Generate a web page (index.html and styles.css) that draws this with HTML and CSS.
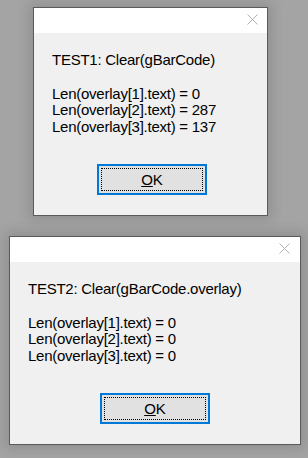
FILE: index.html
```html
<html>
<head>
<title>Message Boxes</title>
<link rel="stylesheet" href="styles.css">
</head>
<body>
<div class="dialog dialog-one">
<div class="title-bar">
<svg class="close" width="11" height="11" viewBox="0 0 11 11"><path d="M0.5 0.5 L10.5 10.5 M10.5 0.5 L0.5 10.5" stroke="#b0b0b0" stroke-width="1" fill="none"/></svg>
</div>
<div class="dialog-body">
<div class="message">
<p>TEST1: Clear(gBarCode)</p>
<p>&nbsp;</p>
<p>Len(overlay[1].text) = 0</p>
<p>Len(overlay[2].text) = 287</p>
<p>Len(overlay[3].text) = 137</p>
</div>
<div class="buttons">
<button class="ok"><span><u>O</u>K</span></button>
</div>
</div>
</div>
<div class="dialog dialog-two">
<div class="title-bar">
<svg class="close" width="11" height="11" viewBox="0 0 11 11"><path d="M0.5 0.5 L10.5 10.5 M10.5 0.5 L0.5 10.5" stroke="#b0b0b0" stroke-width="1" fill="none"/></svg>
</div>
<div class="dialog-body">
<div class="message">
<p>TEST2: Clear(gBarCode.overlay)</p>
<p>&nbsp;</p>
<p>Len(overlay[1].text) = 0</p>
<p>Len(overlay[2].text) = 0</p>
<p>Len(overlay[3].text) = 0</p>
</div>
<div class="buttons">
<button class="ok"><span><u>O</u>K</span></button>
</div>
</div>
</div>
</body>
</html>
```

FILE: styles.css
```css
body {
margin: 0;
background-color: #a4a4a4;
font-family: "Liberation Sans", Arial, sans-serif;
width: 308px; height: 458px;
overflow: hidden;
}
.dialog {
box-sizing: border-box;
height: 209px;
border: 1px solid #5a5a5a;
background-color: #f0f0f0;
box-shadow: 0 0 12px 4px rgba(0,0,0,0.12);
display: flex; flex-direction: column;
}
.dialog-one {
margin: 7px 0 0 33px;
width: 235px;
}
.dialog-two {
margin: 20px 0 0 9px;
width: 292px;
}
.title-bar {
height: 25px;
background-color: #ffffff;
display: flex; justify-content: flex-end; align-items: center;
padding-right: 9px;
}
.dialog-two .title-bar {
padding-right: 10px;
}
.close {
display: block;
margin-top: -2px;
}
.dialog-body {
flex: 1;
padding: 19px 18px 0 18px;
}
.message p {
margin: 0;
font-size: 15px;
line-height: 16.8px;
letter-spacing: -0.25px;
color: #000;
white-space: nowrap;
}
.buttons {
margin-top: 28px;
display: flex; justify-content: center;
}
.dialog-one .buttons {
padding-left: 3px;
}
.ok {
box-sizing: border-box;
width: 110px; height: 31px;
padding: 2px;
background-color: #e1e1e1;
border: 2px solid #0078d7;
font-family: "Liberation Sans", Arial, sans-serif;
font-size: 15px;
color: #000;
}
.ok span {
display: flex; align-items: center; justify-content: center;
height: 100%;
box-sizing: border-box;
border: 1px dotted #000;
}
```
